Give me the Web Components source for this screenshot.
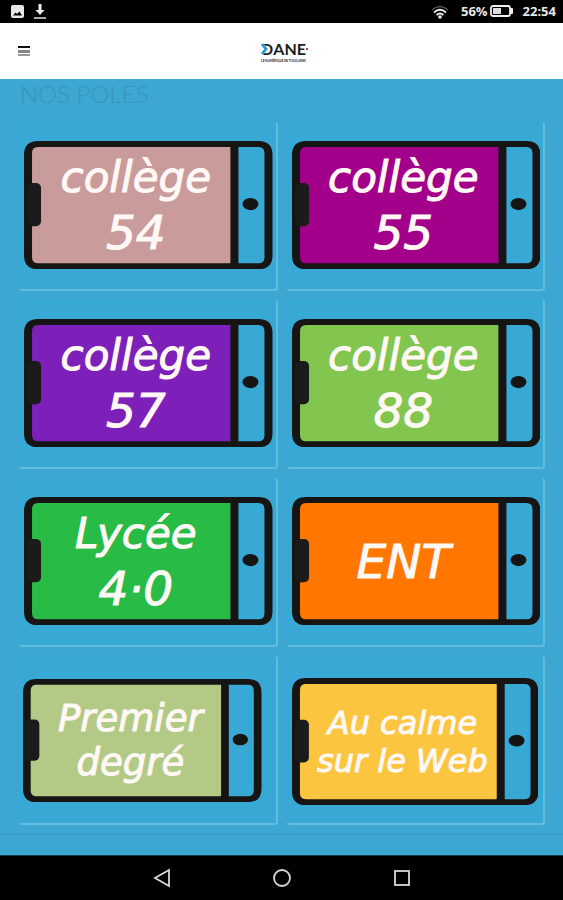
<!DOCTYPE html>
<html lang="fr">
<head>
<meta charset="UTF-8">
<meta name="viewport" content="width=device-width, initial-scale=1.0">
<title>DANE</title>
<style>
    html, body {
        height: 100%;
        margin: 0;
    }
    body {
        font-family: Lato, "Liberation Sans", sans-serif;
        background: #3ba7d2;
    }
</style>
</head>
<body>
<dane-app></dane-app>

<script>
class StatusBar extends HTMLElement {
    constructor() {
        super();
        this.attachShadow({ mode: 'open' });
    }

    connectedCallback() {
        this.shadowRoot.innerHTML = `
            <style>
                :host {
                    display: flex;
                    align-items: center;
                    justify-content: space-between;
                    height: 23px;
                    padding: 0 7px 0 11px;
                    background: #000;
                    color: #e8e8e8;
                    font: 700 13px/23px "Open Sans", sans-serif;
                }
                div {
                    display: flex;
                    align-items: center;
                }
                svg { display: block; }
                .left { gap: 10px; }
                .battery { margin: 0 10px 0 2px; }
                .wifi { margin-right: 12px; }
            </style>
            <div class="left">
                <svg width="13" height="13" viewBox="0 0 13 13">
                    <rect width="13" height="13" rx="2" fill="#e8e8e8"/>
                    <path d="M2 10.5 4.5 7.5 6 9 8.500 6.500 11 10.500Z" fill="#000"/>
                </svg>
                <svg width="12" height="16" viewBox="0 0 12 16">
                    <path d="M4.500 0h3v6H10.500L6 11 1.500 6h3Z" fill="#eee"/>
                    <rect y="13" width="12" height="2" fill="#aaa"/>
                </svg>
            </div>
            <div>
                <svg class="wifi" width="18" height="14" viewBox="0 0 18 14" fill="none">
                    <path d="M1 5Q9-2 17 5" stroke="#555" stroke-width="1.500"/>
                    <path d="M3 7.500Q9 2 15 7.500M5.500 10Q9 7 12.500 10" stroke="#eee" stroke-width="1.800"/>
                    <circle cx="9" cy="12" r="1.800" fill="#eee"/>
                </svg>
                <span>56%</span>
                <svg class="battery" width="23" height="13" viewBox="0 0 23 13">
                    <rect x="1" y="1" width="19" height="10" rx="2" fill="none" stroke="#eee" stroke-width="1.800"/>
                    <rect x="3" y="3" width="8" height="6" fill="#ddd"/>
                    <rect x="20" y="3" width="3" height="6" rx="1" fill="#eee"/>
                </svg>
                <span>22:54</span>
            </div>
        `;
    }
}

class SiteHeader extends HTMLElement {
    constructor() {
        super();
        this.attachShadow({ mode: 'open' });
    }

    connectedCallback() {
        this.shadowRoot.innerHTML = `
            <style>
                :host {
                    display: grid;
                    grid-template-columns: 1fr auto 1fr;
                    align-items: center;
                    height: 56px;
                    padding: 0 5px 0 11px;
                    background: #fff;
                }
                button {
                    justify-self: start;
                    padding: 6px;
                    border: 0;
                    background: none;
                }
                svg { display: block; }
                .logo {
                    display: block;
                    padding-bottom: 1px;
                    color: #1c1c1c;
                    text-decoration: none;
                }
                .name {
                    display: flex;
                    align-items: center;
                    font: 700 16px/20px Lato, sans-serif;
                }
                .d { position: relative; }
                .d svg {
                    position: absolute;
                    left: 0;
                    top: 4px;
                }
                .dot {
                    width: 2px;
                    height: 2px;
                    background: #e0304a;
                }
                .tag {
                    font: 700 3px/4px Lato, sans-serif;
                    white-space: nowrap;
                }
            </style>
            <button aria-label="Menu">
                <svg width="13" height="12" viewBox="0 0 13 12">
                    <rect x="1" y="1" width="12" height="2" fill="#111"/>
                    <rect x="1" y="5" width="12" height="3" fill="#888"/>
                    <rect x="1" y="9" width="12" height="2" fill="#999"/>
                </svg>
            </button>
            <a class="logo" href="#">
                <div class="name">
                    <span class="d">D<svg width="7" height="12" viewBox="0 0 7 12">
                        <path d="M0 0H2L7 6 2 12H0Z" fill="#fff"/>
                        <path d="M1 1 5 6 1 11" fill="none" stroke="#1f9ad6" stroke-width="2.800"/>
                    </svg></span><span>ANE</span>
                    <span class="dot"></span>
                </div>
                <div class="tag">LE NUMÉRIQUE EN TOUS LIENS</div>
            </a>
        `;
    }
}

class PoleCard extends HTMLElement {
    constructor() {
        super();
        this.attachShadow({ mode: 'open' });
    }

    connectedCallback() {
        const color = this.getAttribute('color');

        this.shadowRoot.innerHTML = `
            <style>
                :host {
                    display: block;
                    box-sizing: border-box;
                    min-height: 169px;
                    padding: 19px 3px 16px 5px;
                    border-right: 2px solid #62bce0;
                    border-bottom: 2px solid #62bce0;
                    border-radius: 3px;
                    background: #38a8d5;
                    --size: 42px;
                    --line: 55px;
                    --stroke: 1px;
                }
                :host([size="medium"]) {
                    --size: 37px;
                    --line: 44px;
                    padding: 23px 14px 16px 4px;
                }
                :host([size="small"]) {
                    --size: 32px;
                    --line: 38px;
                    padding: 22px 5px 16px 5px;
                }
                a {
                    display: grid;
                    color: #fff8f5;
                    text-decoration: none;
                }
                svg, .label { grid-area: 1 / 1; }
                svg {
                    display: block;
                    width: 100%;
                    height: auto;
                }
                .label {
                    align-self: center;
                    width: 90%;
                    text-align: center;
                    white-space: nowrap;
                    font: italic 400 var(--size)/var(--line) "DejaVu Sans", sans-serif;
                    -webkit-text-stroke: var(--stroke) #fff8f5;
                }
                ::slotted(.big) {
                    font-size: 47px;
                }
            </style>
            <a href="#">
                <svg viewBox="0 0 248 128" aria-hidden="true">
                    <rect x="5" y="4" width="203" height="120" rx="8" fill="${color}"/>
                    <path fill="#161514" fill-rule="evenodd" d="M14 0H234Q248 0 248 14V114Q248 128 234 128H14Q0 128 0 114V14Q0 0 14 0ZM14 6Q8 6 8 12V116Q8 122 14 122H234Q240 122 240 116V12Q240 6 234 6Z"/>
                    <rect x="206" y="3" width="8" height="122" fill="#161514"/>
                    <rect x="3" y="42" width="14" height="43" rx="5" fill="#1c1b1b"/>
                    <ellipse cx="226" cy="63" rx="8" ry="6" fill="#161514"/>
                </svg>
                <div class="label"><slot></slot></div>
            </a>
        `;
    }
}

class NavBar extends HTMLElement {
    constructor() {
        super();
        this.attachShadow({ mode: 'open' });
    }

    connectedCallback() {
        this.shadowRoot.innerHTML = `
            <style>
                :host {
                    display: flex;
                    align-items: center;
                    justify-content: center;
                    gap: 90px;
                    height: 44px;
                    border-top: 1px solid #12404f;
                    background: #000;
                }
                button {
                    padding: 5px;
                    border: 0;
                    background: none;
                }
                svg {
                    display: block;
                    fill: none;
                    stroke: #d8d8d8;
                    stroke-width: 1.800;
                }
            </style>
            <button aria-label="Retour"><svg width="20" height="20" viewBox="0 0 20 20"><path d="M17 2v16L3 10Z"/></svg></button>
            <button aria-label="Accueil"><svg width="20" height="20" viewBox="0 0 20 20"><circle cx="10" cy="10" r="8"/></svg></button>
            <button aria-label="Applications"><svg width="20" height="20" viewBox="0 0 20 20"><rect x="3" y="3" width="14" height="14"/></svg></button>
        `;
    }
}

const poles = [
    { lines: ['collège', '54'], color: '#c99c9b' },
    { lines: ['collège', '55'], color: '#a2008a' },
    { lines: ['collège', '57'], color: '#7d20ba' },
    { lines: ['collège', '88'], color: '#82c64f' },
    { lines: ['Lycée', '4·0'], color: '#28bb45' },
    { lines: ['ENT'], color: '#ff7600' },
    { lines: ['Premier', 'degré'], color: '#b3ca87', size: 'medium' },
    { lines: ['Au calme', 'sur le Web'], color: '#fbc540', size: 'small' }
];

class DaneApp extends HTMLElement {
    constructor() {
        super();
        this.attachShadow({ mode: 'open' });
    }

    connectedCallback() {
        this.shadowRoot.innerHTML = `
            <style>
                :host {
                    display: flex;
                    flex-direction: column;
                    min-height: 100vh;
                }
                main {
                    flex: 1;
                }
                h1 {
                    margin: 0;
                    padding: 0 20px;
                    color: #3894ba;
                    font: 300 24px/30px Lato, sans-serif;
                }
                .grid {
                    display: grid;
                    grid-template-columns: 1fr 1fr;
                    gap: 9px;
                    padding: 13px 18px 9px 19px;
                    border-bottom: 1px solid #3599c4;
                }
            </style>
            <status-bar></status-bar>
            <site-header></site-header>
            <main>
                <h1>NOS POLES</h1>
                <div class="grid"></div>
            </main>
            <nav-bar></nav-bar>
        `;

        const grid = this.shadowRoot.querySelector('.grid');
        poles.forEach(pole => {
            const card = document.createElement('pole-card');
            card.setAttribute('color', pole.color);
            if (pole.size) card.setAttribute('size', pole.size);
            // numbers and acronyms are set larger than words
            card.innerHTML = pole.lines
                .map(line => `<div class="${/[a-z]/.test(line) ? '' : 'big'}">${line}</div>`)
                .join('');
            grid.appendChild(card);
        });
    }
}

customElements.define('status-bar', StatusBar);
customElements.define('site-header', SiteHeader);
customElements.define('pole-card', PoleCard);
customElements.define('nav-bar', NavBar);
customElements.define('dane-app', DaneApp);
</script>
</body>
</html>
